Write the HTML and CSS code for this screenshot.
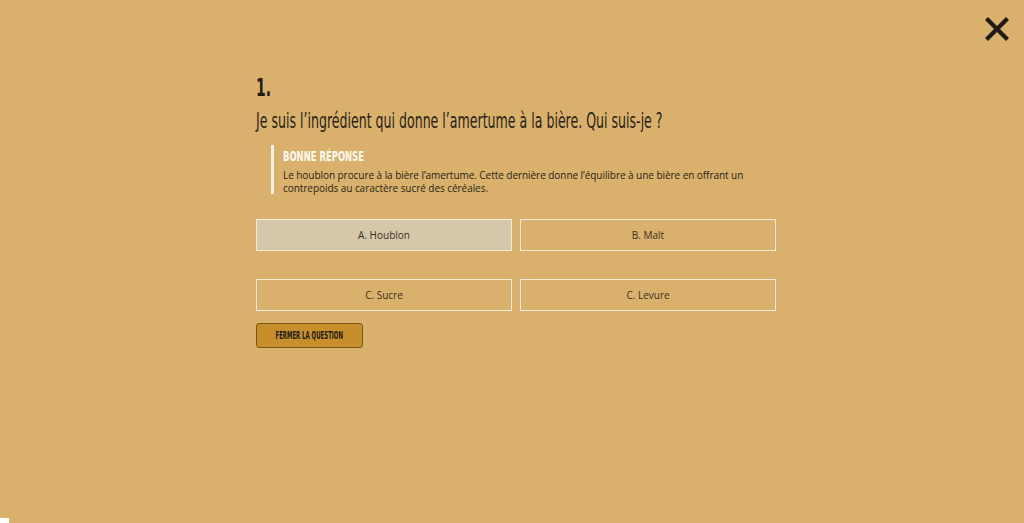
FILE: index.html
```html
<!DOCTYPE html>
<html lang="fr">
<head>
<meta charset="utf-8">
<link rel="stylesheet" href="styles.css">
</head>
<body>
<button class="close" aria-label="Fermer">
  <svg width="24" height="24" viewBox="0 0 24 24"><path d="M3 3L21 21M21 3L3 21" stroke="#1f1a12" stroke-width="4.2" stroke-linecap="square"/></svg>
</button>
<main class="quiz">
  <div class="num"><span class="squeeze">1.</span></div>
  <h1 class="question"><span class="squeeze">Je suis l’ingrédient qui donne l’amertume à la bière. Qui suis-je ?</span></h1>
  <div class="answer">
    <h2 class="answer-title"><span class="squeeze">BONNE RÉPONSE</span></h2>
    <p class="answer-text">Le houblon procure à la bière l’amertume. Cette dernière donne l’équilibre à une bière en offrant un contrepoids au caractère sucré des céréales.</p>
  </div>
  <div class="choices">
    <div class="choice selected">A. Houblon</div>
    <div class="choice">B. Malt</div>
    <div class="choice">C. Sucre</div>
    <div class="choice">C. Levure</div>
  </div>
  <button class="btn-close"><span class="squeeze">FERMER LA QUESTION</span></button>
</main>
<div class="corner"></div>
</body>
</html>
```
FILE: styles.css
```css
html, body { margin: 0; padding: 0; }
body {
  background: #d9b16d;
  width: 1024px;
  height: 523px;
  overflow: hidden;
  position: relative;
  font-family: "Open Sans", sans-serif;
  color: #2a2316;
}
.close {
  position: absolute;
  top: 17px;
  left: 985px;
  width: 24px;
  height: 24px;
  padding: 0;
  border: 0;
  background: none;
}
.close svg { display: block; }
.quiz {
  padding: 76px 0 0 256px;
  width: 520px;
}
.squeeze {
  display: inline-block;
  white-space: nowrap;
  transform-origin: left center;
}
.num, .question, .answer-title, .btn-close {
  font-family: "DejaVu Sans Condensed", "DejaVu Sans", sans-serif;
  font-stretch: condensed;
}
.num {
  font-weight: 700;
  font-size: 25px;
  line-height: 24px;
  height: 24px;
  color: #211b10;
}
.num .squeeze { transform: scaleX(0.62); }
.question {
  margin: 8px 0 0;
  font-weight: 400;
  font-size: 22px;
  line-height: 26px;
  color: #2a2316;
}
.question .squeeze { transform: scaleX(0.635); }
.answer {
  margin: 11px 0 0 15px;
  border-left: 3px solid #fbf3e4;
  padding: 3px 0 0 9px;
}
.answer-title {
  margin: 0;
  font-weight: 700;
  font-size: 14px;
  line-height: 16px;
  color: #fffaf0;
}
.answer-title .squeeze { transform: scaleX(0.67); }
.answer-text {
  margin: 5px 0 0;
  font-size: 10px;
  line-height: 12.5px;
  letter-spacing: -0.05px;
  color: #2a2316;
  width: 480px;
}
.choices {
  margin-top: 25px;
  display: grid;
  grid-template-columns: 256px 256px;
  column-gap: 8px;
  row-gap: 28px;
}
.choice {
  height: 30px;
  border: 1px solid #f6ead4;
  display: flex;
  align-items: center;
  justify-content: center;
  font-size: 10px;
  color: #3a3020;
}
.choice.selected { background: #d6c6aa; }
.btn-close {
  margin-top: 12px;
  width: 107px;
  height: 25px;
  border: 1px solid #7a581c;
  border-radius: 3px;
  background: #c68f2c;
  padding: 0;
  font-weight: 700;
  font-size: 10px;
  color: #1f1a10;
  display: flex;
  align-items: center;
  justify-content: center;
  overflow: hidden;
}
.btn-close .squeeze {
  transform: scaleX(0.6);
  transform-origin: center;
}
.corner {
  position: absolute;
  left: 0;
  bottom: 0;
  width: 9px;
  height: 5px;
  background: #fff;
}
```
